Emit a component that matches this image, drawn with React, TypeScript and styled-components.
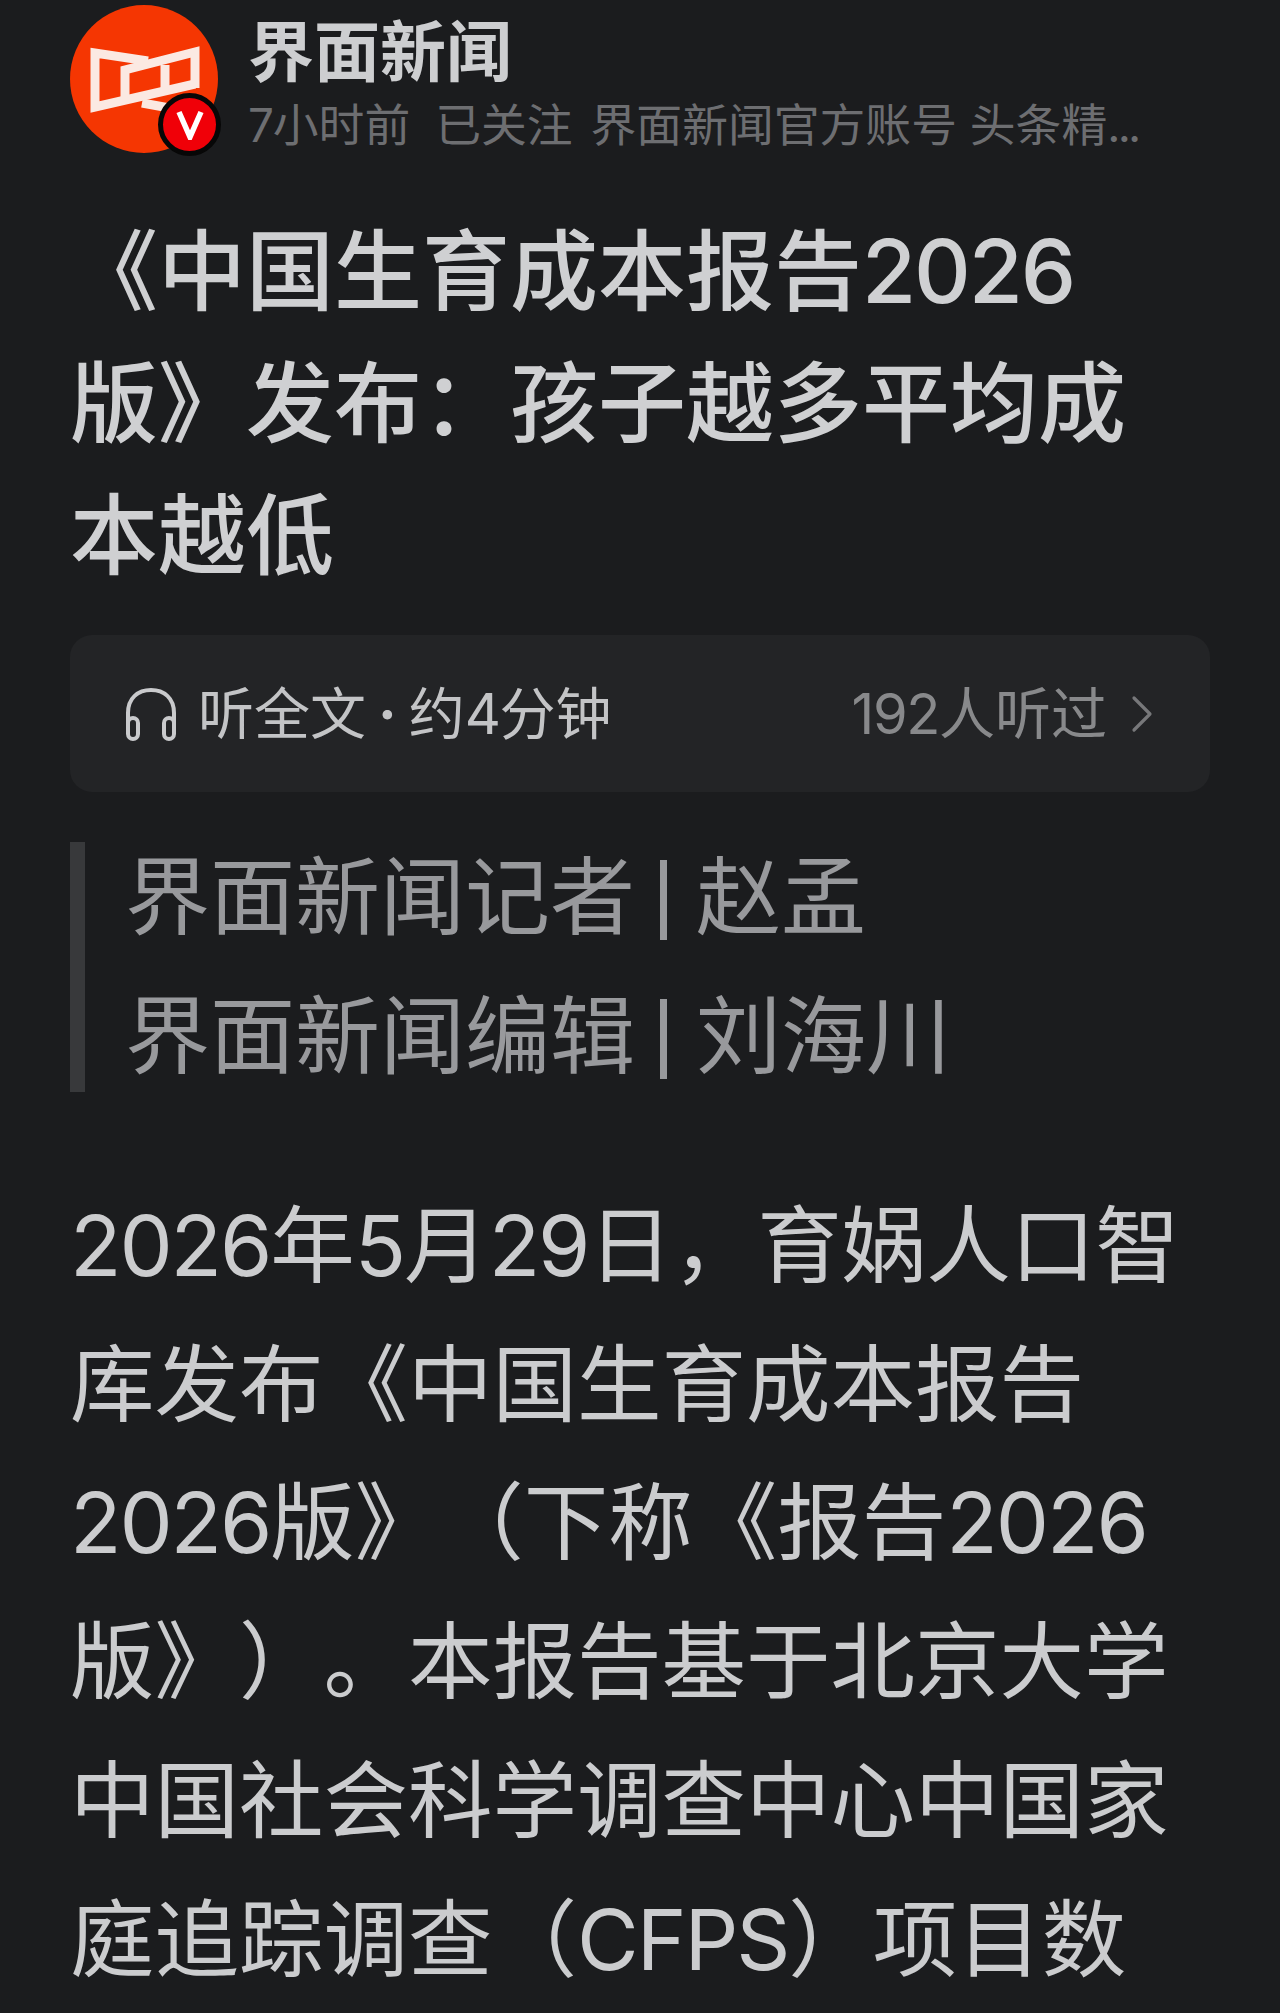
import React from 'react'
import styled, { createGlobalStyle } from 'styled-components'
import { ChevronRight } from 'lucide-react'

const Global = createGlobalStyle`
  html, body {
    margin: 0;
    padding: 0;
    background: #1b1c1e;
  }
  body {
    font-family: "Inter", "Noto Sans CJK SC", sans-serif;
    text-spacing-trim: space-all;
  }
`

const Page = styled.div`
  width: 1280px;
  height: 2013px;
  overflow: hidden;
  box-sizing: border-box;
  background: #1b1c1e;
  padding: 5px 70px 0;
`

const Header = styled.div`
  display: flex;
  align-items: flex-start;
  gap: 30px;
`

const Avatar = styled.div`
  position: relative;
  width: 148px;
  height: 148px;
  flex: none;
  border-radius: 50%;
  background: #f53602;
`

const Badge = styled.div`
  position: absolute;
  right: -3px;
  bottom: -3px;
  width: 63px;
  height: 63px;
  box-sizing: border-box;
  border: 5px solid #070707;
  border-radius: 50%;
  background: #f00008;
  display: flex;
  align-items: center;
  justify-content: center;
`

const HeaderText = styled.div`
  min-width: 0;
  flex: 1;
  padding-top: 5px;
`

const Name = styled.div`
  color: #cdced0;
  font-size: 66px;
  font-weight: 700;
  line-height: 84px;
  white-space: nowrap;
`

const Meta = styled.div`
  display: flex;
  gap: 25px;
  color: #6d6e71;
  font-size: 45.8px;
  line-height: 60px;
  margin-top: 2px;
  white-space: nowrap;
`

const Intro = styled.span`
  margin-left: -7px;
`

const Dots = styled.span`
  letter-spacing: -0.06em;
`

const Title = styled.h1`
  margin: 49px 0 0;
  color: #cfd0d2;
  font-size: 88px;
  font-weight: 500;
  line-height: 132px;
`

const Line = styled.div`
  white-space: nowrap;
`

const Num = styled.span`
  letter-spacing: -0.025em;
`

const ListenBar = styled.div`
  margin-top: 34px;
  width: 1140px;
  height: 157px;
  box-sizing: border-box;
  border-radius: 22px;
  background: #232426;
  padding: 0 36px 0 54px;
  display: flex;
  align-items: center;
  justify-content: space-between;
`

const ListenLeft = styled.div`
  display: flex;
  align-items: center;
  gap: 20px;
  color: #c3c4c6;
  font-size: 56px;
  line-height: 70px;
`

const Dot = styled.span`
  margin: 0 12px;
  font-weight: 700;
`

const ListenRight = styled.div`
  display: flex;
  align-items: center;
  gap: 3px;
  color: #88898b;
  font-size: 56px;
  line-height: 70px;
`

const Byline = styled.blockquote`
  margin: 50px 0 0;
  border-left: 15px solid #38393b;
  padding-left: 40px;
  color: #98999c;
  font-size: 85px;
  line-height: 139px;
  height: 250px;
  display: flex;
  flex-direction: column;
  justify-content: center;
`

const Pipe = styled.span`
  display: inline-block;
  width: 7px;
  height: 80px;
  margin: 0 29px 0 25px;
  background: #98999c;
  vertical-align: -12px;
`

const Body = styled.div`
  margin-top: 84px;
  color: #cbccce;
  font-size: 84.5px;
  line-height: 138.7px;
`

const Logo = () => (
  <svg width="148" height="148" viewBox="0 0 148 148" fill="none" stroke="#fbe9e2" strokeWidth="9">
    <path d="M78 56 L25 48 V102 L125 79" />
    <path d="M125 83 V47 L55 65 V92" />
    <path d="M95 60 V86" />
    <path d="M72 98 L105 104" />
  </svg>
)

const Headphones = () => (
  <svg width="54" height="54" viewBox="0 0 54 54" fill="none" stroke="#c9cacc" strokeWidth="4">
    <path d="M4 36 V26 C4 11 14 3 27 3 C40 3 50 11 50 26 V36" />
    <rect x="4" y="31" width="10" height="21" rx="5" />
    <rect x="40" y="31" width="10" height="21" rx="5" />
  </svg>
)

export default function App() {
  return (
    <Page>
      <Global />
      <Header>
        <Avatar>
          <Logo />
          <Badge>
            <svg width="28" height="30" viewBox="0 0 28 30">
              <path d="M3 2 L14 27 L25 2" fill="none" stroke="#fff" strokeWidth="5.5" />
            </svg>
          </Badge>
        </Avatar>
        <HeaderText>
          <Name>界面新闻</Name>
          <Meta>
            <span><Num>7</Num>小时前</span>
            <span>已关注</span>
            <Intro>界面新闻官方账号 头条精<Dots>...</Dots></Intro>
          </Meta>
        </HeaderText>
      </Header>
      <Title>
        <Line>《中国生育成本报告<Num>2026</Num></Line>
        <Line>版》发布：孩子越多平均成</Line>
        <Line>本越低</Line>
      </Title>
      <ListenBar>
        <ListenLeft>
          <Headphones />
          <span>听全文<Dot>·</Dot>约<Num>4</Num>分钟</span>
        </ListenLeft>
        <ListenRight>
          <span><Num>192</Num>人听过</span>
          <ChevronRight size={64} strokeWidth={1.2} color="#77787a" />
        </ListenRight>
      </ListenBar>
      <Byline>
        <Line>界面新闻记者<Pipe />赵孟</Line>
        <Line>界面新闻编辑<Pipe />刘海川</Line>
      </Byline>
      <Body>
        <Line><Num>2026</Num>年<Num>5</Num>月<Num>29</Num>日，育娲人口智</Line>
        <Line>库发布《中国生育成本报告</Line>
        <Line><Num>2026</Num>版》（下称《报告<Num>2026</Num></Line>
        <Line>版》）。本报告基于北京大学</Line>
        <Line>中国社会科学调查中心中国家</Line>
        <Line>庭追踪调查（<Num>CFPS</Num>）项目数</Line>
      </Body>
    </Page>
  )
}
